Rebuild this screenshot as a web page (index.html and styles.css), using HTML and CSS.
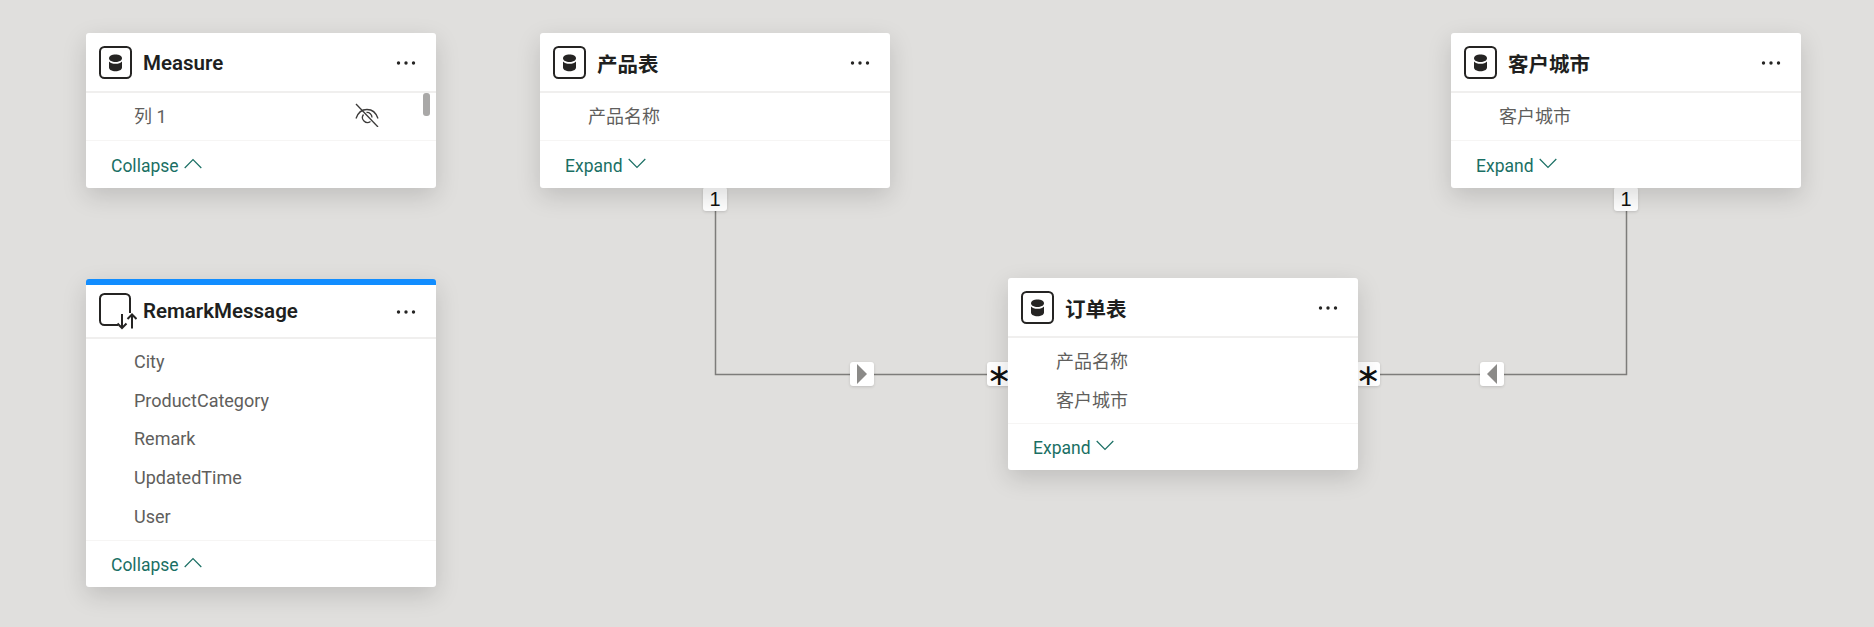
FILE: index.html
```html
<!DOCTYPE html>
<html lang="zh">
<head>
<meta charset="utf-8">
<title>Model view</title>
<link rel="stylesheet" href="styles.css">
</head>
<body>
<svg class="defs" width="0" height="0" aria-hidden="true">
  <symbol id="db" viewBox="0 0 33 33">
    <rect x="1" y="1" width="31" height="31" rx="4.5" fill="none" stroke="#252423" stroke-width="2"/>
    <path d="M10 12.200c0-2.200 2.900-3.700 6.500-3.700s6.500 1.500 6.500 3.700c0 2.200-2.900 3.700-6.500 3.700S10 14.400 10 12.200Z" fill="#252423"/>
    <path d="M10 15.500c1.300 1.500 3.700 2.300 6.500 2.300s5.200-.8 6.500-2.300v6c0 2.200-2.900 3.700-6.500 3.700S10 23.700 10 21.500Z" fill="#252423"/>
  </symbol>
  <symbol id="dq" viewBox="0 0 38 37">
    <path d="M19 32H5.500A4.500 4.500 0 0 1 1 27.500V5.500A4.500 4.500 0 0 1 5.500 1h21A4.500 4.500 0 0 1 31 5.500V20" fill="none" stroke="#252423" stroke-width="2"/>
    <path d="M23 21v14M18.500 30.500l4.500 4.500 4.500-4.500M33 35.500V21.500M28.500 26l4.500-4.500 4.500 4.500" fill="none" stroke="#252423" stroke-width="2"/>
  </symbol>
  <symbol id="dots" viewBox="0 0 20 4">
    <circle cx="2.500" cy="2" r="1.700" fill="#252423"/><circle cx="10" cy="2" r="1.700" fill="#252423"/><circle cx="17.500" cy="2" r="1.700" fill="#252423"/>
  </symbol>
  <symbol id="up" viewBox="0 0 18 11">
    <path d="M.7 10 9 1.500 17.300 10" fill="none" stroke="currentColor" stroke-width="1.200"/>
  </symbol>
  <symbol id="down" viewBox="0 0 18 11">
    <path d="M.7 1 9 9.500 17.300 1" fill="none" stroke="currentColor" stroke-width="1.200"/>
  </symbol>
</svg>

<main class="canvas">
  <svg class="wires" width="1874" height="627" aria-hidden="true">
    <path d="M715.500 200V374.500H1000M1626.500 200V374.500H1368" fill="none" stroke="#7d7c7a" stroke-width="1.500"/>
  </svg>

  <span class="badge b-one-a">1</span>
  <span class="badge b-one-b">1</span>
  <span class="badge star b-star-a">∗</span>
  <span class="badge star b-star-b">∗</span>
  <span class="badge b-arrow-a"><i class="tri-right"></i></span>
  <span class="badge b-arrow-b"><i class="tri-left"></i></span>

  <section class="card c-measure">
    <header class="head"><svg class="ico"><use href="#db"/></svg><h2>Measure</h2><svg class="dots"><use href="#dots"/></svg></header>
    <div class="rows">
      <div class="row"><span>列 1</span>
        <svg class="eye" viewBox="0 0 24 24" aria-hidden="true">
          <path d="M1 1 23 24" fill="none" stroke="#3b3a39" stroke-width="1.300"/>
          <path d="M1 15.500C3 9.500 7 6.500 12 6.500c5 0 9 3 11 9" fill="none" stroke="#3b3a39" stroke-width="1.300"/>
          <path d="M8.500 11.500a5 5 0 0 0 7 7M11.500 9.500a5 5 0 0 1 5.500 5" fill="none" stroke="#3b3a39" stroke-width="1.300"/>
        </svg>
      </div>
      <span class="thumb"></span>
    </div>
    <footer class="foot">Collapse <svg class="chev"><use href="#up"/></svg></footer>
  </section>

  <section class="card c-product">
    <header class="head"><svg class="ico"><use href="#db"/></svg><h2>产品表</h2><svg class="dots"><use href="#dots"/></svg></header>
    <div class="rows"><div class="row">产品名称</div></div>
    <footer class="foot">Expand <svg class="chev"><use href="#down"/></svg></footer>
  </section>

  <section class="card c-city">
    <header class="head"><svg class="ico"><use href="#db"/></svg><h2>客户城市</h2><svg class="dots"><use href="#dots"/></svg></header>
    <div class="rows"><div class="row">客户城市</div></div>
    <footer class="foot">Expand <svg class="chev"><use href="#down"/></svg></footer>
  </section>

  <section class="card c-remark">
    <header class="head head-query"><svg class="ico ico-q"><use href="#dq"/></svg><h2>RemarkMessage</h2><svg class="dots"><use href="#dots"/></svg></header>
    <div class="rows">
      <div class="row">City</div>
      <div class="row">ProductCategory</div>
      <div class="row">Remark</div>
      <div class="row">UpdatedTime</div>
      <div class="row">User</div>
    </div>
    <footer class="foot">Collapse <svg class="chev"><use href="#up"/></svg></footer>
  </section>

  <section class="card c-order">
    <header class="head"><svg class="ico"><use href="#db"/></svg><h2>订单表</h2><svg class="dots"><use href="#dots"/></svg></header>
    <div class="rows">
      <div class="row">产品名称</div>
      <div class="row">客户城市</div>
    </div>
    <footer class="foot">Expand <svg class="chev"><use href="#down"/></svg></footer>
  </section>
</main>
</body>
</html>
```

FILE: styles.css
```css
* { box-sizing: border-box; }

html, body {
  margin: 0;
  height: 100%;
  overflow: hidden;
}

body {
  background: #e0dfdd;
  font-family: Roboto, "Noto Sans CJK SC", sans-serif;
}

.defs { position: absolute; }

.canvas {
  position: relative;
  width: 1874px;
  height: 627px;
}

.wires {
  position: absolute;
  left: 0;
  top: 0;
}

/* diagram nodes */
.card {
  position: absolute;
  width: 349.500px;
  min-height: 155px;
  display: flex;
  flex-direction: column;
  background: #fff;
  border-radius: 3px;
  box-shadow: 0 8px 24px rgba(0, 0, 0, .15);
}

.c-measure { left: 86px; top: 33px; }
.c-product { left: 540px; top: 33px; }
.c-city { left: 1451px; top: 33px; }
.c-remark { left: 86px; top: 279px; border-top: 6px solid #118dff; }
.c-order { left: 1008px; top: 278px; }

.head {
  height: 60px;
  flex: none;
  display: flex;
  align-items: center;
  padding: 1px 20px 0 13px;
  border-bottom: 2px solid #f0efee;
}

.head-query { height: 54px; }

.ico {
  width: 33px;
  height: 33px;
  flex: none;
  margin-right: 11px;
}

.ico-q {
  width: 38px;
  height: 37px;
  margin-right: 6px;
}

.head h2 {
  flex: 1;
  margin: 1px 0 0;
  font-size: 20.500px;
  font-weight: 600;
  color: #201f1e;
  white-space: nowrap;
}

.head-query h2 { margin-top: -2px; }

.dots {
  width: 20px;
  height: 4px;
  flex: none;
}

.rows {
  position: relative;
  min-height: 47px;
  padding: 3px 0 4px;
}

.row {
  position: relative;
  height: 38.750px;
  display: flex;
  align-items: center;
  padding-left: 48px;
  font-size: 18px;
  color: #605e5c;
  white-space: nowrap;
}

.eye {
  position: absolute;
  left: 269px;
  top: 7px;
  width: 24px;
  height: 24px;
}

.thumb {
  position: absolute;
  right: 6px;
  top: 0;
  width: 7px;
  height: 23px;
  border-radius: 3px;
  background: #a9a8a7;
}

.foot {
  flex: 1;
  min-height: 47px;
  display: flex;
  align-items: center;
  gap: 5px;
  padding: 3px 0 0 25px;
  border-top: 1px solid #f6f5f4;
  font-size: 17.500px;
  color: #1a6f64;
}

.chev {
  width: 18px;
  height: 11px;
  margin-top: -5px;
}

/* relationship markers on the wires */
.badge {
  position: absolute;
  width: 24px;
  height: 24px;
  display: flex;
  align-items: center;
  justify-content: center;
  background: #fff;
  border-radius: 3px;
  box-shadow: 0 1px 3px rgba(0, 0, 0, .14);
  color: #111;
  font-family: "Liberation Sans", sans-serif;
  font-size: 20px;
}

.star {
  font-family: "DejaVu Sans", sans-serif;
  font-size: 30px;
}

.b-one-a { left: 703px; top: 187px; }
.b-one-b { left: 1614px; top: 187px; }
.b-star-a { left: 987px; top: 362px; }
.b-star-b { left: 1356px; top: 362px; }
.b-arrow-a { left: 850px; top: 362px; }
.b-arrow-b { left: 1480px; top: 362px; }

.tri-right, .tri-left {
  display: block;
  width: 0;
  height: 0;
  border-top: 10px solid transparent;
  border-bottom: 10px solid transparent;
}

.tri-right { border-left: 10px solid #8b8a88; }
.tri-left { border-right: 10px solid #8b8a88; }
```
